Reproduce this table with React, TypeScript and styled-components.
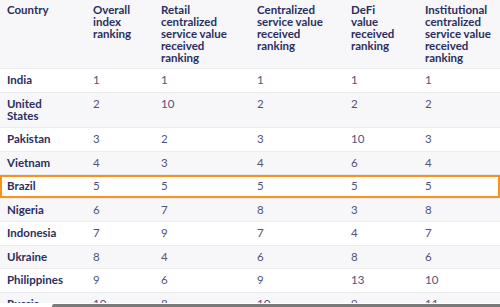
import styled, { createGlobalStyle } from 'styled-components';

type Row = { country: string; values: number[]; highlight?: boolean };

const columns = [
	'Country',
	'Overall index ranking',
	'Retail centralized service value received ranking',
	'Centralized service value received ranking',
	'DeFi value received ranking',
	'Institutional centralized service value received ranking',
];

const widths = [86, 68, 96, 94, 74, 82];

const rows: Row[] = [
	{ country: 'India', values: [1, 1, 1, 1, 1] },
	{ country: 'United States', values: [2, 10, 2, 2, 2] },
	{ country: 'Pakistan', values: [3, 2, 3, 10, 3] },
	{ country: 'Vietnam', values: [4, 3, 4, 6, 4] },
	{ country: 'Brazil', values: [5, 5, 5, 5, 5], highlight: true },
	{ country: 'Nigeria', values: [6, 7, 8, 3, 8] },
	{ country: 'Indonesia', values: [7, 9, 7, 4, 7] },
	{ country: 'Ukraine', values: [8, 4, 6, 8, 6] },
	{ country: 'Philippines', values: [9, 6, 9, 13, 10] },
	{ country: 'Russia', values: [10, 8, 10, 9, 11] },
];

const App = () => (
	<>
		<GlobalStyle />
		<Frame>
			<Viewport>
				<Table>
					<colgroup>
						{widths.map((w, i) => (
							<col key={i} style={{ width: w }} />
						))}
					</colgroup>
					<thead>
						<HeadRow>
							{columns.map((c) => (
								<HeadCell key={c}>{c}</HeadCell>
							))}
						</HeadRow>
					</thead>
					<tbody>
						{rows.map((r, i) => (
							<BodyRow key={r.country} $striped={i % 2 === 1} $highlight={r.highlight}>
								<CountryCell>{r.country}</CountryCell>
								{r.values.map((v, j) => (
									<ValueCell key={j}>{v}</ValueCell>
								))}
							</BodyRow>
						))}
					</tbody>
				</Table>
			</Viewport>
			<ScrollTrack>
				<ScrollThumb />
			</ScrollTrack>
		</Frame>
	</>
);

export default App;

const GlobalStyle = createGlobalStyle`
	html, body {
		margin: 0;
		padding: 0;
		background: #ffffff;
	}
	body {
		font-family: Lato, 'Noto Sans', sans-serif;
		color: #2b2e5e;
	}
`;

const Frame = styled.div`
	display: flex;
	flex-direction: column;
	width: 500px;
	height: 307px;
	overflow: hidden;
`;

const Viewport = styled.div`
	height: 303px;
	flex: none;
	overflow: hidden;
`;

const Table = styled.table`
	border-collapse: collapse;
	table-layout: fixed;
	width: 500px;
	font-size: 11.5px;
	line-height: 12px;
`;

const HeadRow = styled.tr`
	background: #f7f7f9;
	border-bottom: 1px solid #ebebf0;
`;

const HeadCell = styled.th`
	text-align: left;
	vertical-align: top;
	font-weight: 700;
	color: #2b2e5e;
	padding: 4px 18px 4px 7px;
	height: 60px;

	&:last-child {
		padding-right: 4px;
	}
`;

const BodyRow = styled.tr<{ $striped: boolean; $highlight?: boolean }>`
	background: ${(p) => (p.$striped ? '#f7f7f9' : '#ffffff')};
	border-bottom: 1px solid #ebebf0;
	outline: ${(p) => (p.$highlight ? '2px solid #f7931a' : 'none')};
	outline-offset: -2px;
`;

const CountryCell = styled.td`
	vertical-align: top;
	font-weight: 700;
	color: #2b2e5e;
	padding: 5px 18px 5.5px 7px;
`;

const ValueCell = styled.td`
	vertical-align: top;
	color: #4f547c;
	padding: 5px 18px 5.5px 7px;

	&:last-child {
		padding-right: 4px;
	}
`;

const ScrollTrack = styled.div`
	flex: 1;
	display: flex;
	align-items: flex-end;
	padding-left: 52px;
	background: #ffffff;
`;

const ScrollThumb = styled.div`
	flex: 1;
	height: 3px;
	background: #7a7a7a;
	border-radius: 2px 0 0 0;
`;
